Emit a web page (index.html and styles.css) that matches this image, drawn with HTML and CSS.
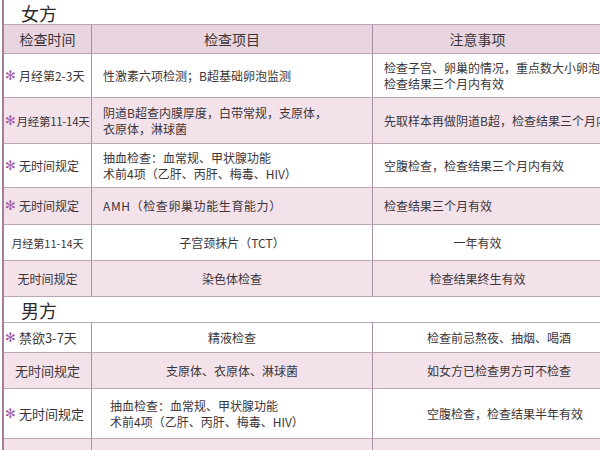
FILE: index.html
```html
<!DOCTYPE html>
<html lang="zh">
<head>
<meta charset="utf-8">
<title>孕前检查项目</title>
<link rel="stylesheet" href="styles.css">
</head>
<body>
<div class="sheet">
  <div class="title t1">女方</div>
  <div class="row head h29">
    <div class="c1 center">检查时间</div>
    <div class="c2 center">检查项目</div>
    <div class="c3 center">注意事项</div>
  </div>
  <div class="row h44">
    <div class="c1"><span class="star">✻</span>月经第2-3天</div>
    <div class="c2 pl">性激素六项检测；B超基础卵泡监测</div>
    <div class="c3 pl">检查子宫、卵巢的情况，重点数大小卵泡<br>检查结果三个月内有效</div>
  </div>
  <div class="row pink h46">
    <div class="c1 tight"><span class="star">✻</span>月经第11-14天</div>
    <div class="c2 pl">阴道B超查内膜厚度，白带常规，支原体，<br>衣原体，淋球菌</div>
    <div class="c3 pl">先取样本再做阴道B超，检查结果三个月内有效</div>
  </div>
  <div class="row h44">
    <div class="c1"><span class="star">✻</span>无时间规定</div>
    <div class="c2 pl">抽血检查：血常规、甲状腺功能<br>术前4项（乙肝、丙肝、梅毒、HIV）</div>
    <div class="c3 pl">空腹检查，检查结果三个月内有效</div>
  </div>
  <div class="row pink h37">
    <div class="c1"><span class="star">✻</span>无时间规定</div>
    <div class="c2 pl amh">AMH（检查卵巢功能生育能力）</div>
    <div class="c3 pl">检查结果三个月有效</div>
  </div>
  <div class="row h36">
    <div class="c1 center small">月经第11-14天</div>
    <div class="c2 center">子宫颈抹片（TCT）</div>
    <div class="c3 center">一年有效</div>
  </div>
  <div class="row pink h36">
    <div class="c1 center">无时间规定</div>
    <div class="c2 center">染色体检查</div>
    <div class="c3 center">检查结果终生有效</div>
  </div>
  <div class="row title t2">男方</div>
  <div class="row h30">
    <div class="c1 big"><span class="star">✻</span>禁欲3-7天</div>
    <div class="c2 center">精液检查</div>
    <div class="c3 pr">检查前忌熬夜、抽烟、喝酒</div>
  </div>
  <div class="row pink h36">
    <div class="c1 center big">无时间规定</div>
    <div class="c2 center">支原体、衣原体、淋球菌</div>
    <div class="c3 pr">如女方已检查男方可不检查</div>
  </div>
  <div class="row h50">
    <div class="c1 big"><span class="star">✻</span>无时间规定</div>
    <div class="c2 pl2">抽血检查：血常规、甲状腺功能<br>术前4项（乙肝、丙肝、梅毒、HIV）</div>
    <div class="c3 pr">空腹检查，检查结果半年有效</div>
  </div>
  <div class="row pink h40">
    <div class="c1"></div>
    <div class="c2"></div>
    <div class="c3"></div>
  </div>
</div>
</body>
</html>
```

FILE: styles.css
```css
html, body {
  margin: 0;
  padding: 0;
  background: #ffffff;
  overflow: hidden;
}

body {
  width: 600px;
  height: 450px;
  font-family: "Noto Sans CJK SC", "Noto Sans", sans-serif;
  color: #3b3539;
  font-size: 12px;
}

.sheet {
  margin-left: 2px;
  border-left: 2px solid #a27f9c;
  width: 700px;
}

.title {
  display: flex;
  align-items: center;
  padding-left: 17px;
  font-size: 18px;
  color: #2e2a2d;
  background: #ffffff;
}

.t1 {
  height: 24px;
  padding-top: 2px;
  box-sizing: border-box;
}

.t2 {
  height: 26px;
  border-top: 1px solid #bda6b8;
  box-sizing: border-box;
}

.row {
  display: flex;
  box-sizing: border-box;
  border-top: 1px solid #bda6b8;
  background: #ffffff;
}

.head {
  background: #e9d5e0;
  font-size: 14px;
}

.pink {
  background: #f3e2e9;
}

.h29 { height: 29px; }
.h30 { height: 30px; }
.h36 { height: 36px; }
.h37 { height: 37px; }
.h40 { height: 40px; }
.h44 { height: 44px; }
.h46 { height: 46px; }
.h50 { height: 50px; }

.c1, .c2, .c3 {
  display: flex;
  align-items: center;
  box-sizing: border-box;
  line-height: 16px;
}

.c1 {
  width: 88px;
  border-right: 1px solid #a88fa6;
  padding-left: 1px;
  white-space: nowrap;
}

.c2 {
  width: 281px;
  border-right: 1px solid #a88fa6;
}

.c3 {
  flex: 1;
}

.center {
  justify-content: center;
}

.c1.center {
  padding-left: 0;
}

.pl {
  padding-left: 11px;
}

.pl2 {
  padding-left: 18px;
}

.pr {
  padding-left: 54px;
}

.c3.center {
  padding-right: 130px;
  padding-left: 8px;
}

.star {
  color: #a05aa8;
  font-size: 13px;
  font-weight: bold;
  margin-right: 3px;
  font-family: "DejaVu Sans", sans-serif;
}

.tight {
  letter-spacing: -0.3px;
  font-size: 11.5px;
}

.tight .star {
  margin-right: 1px;
}

.small {
  font-size: 11px;
  padding-left: 6px;
}

.big {
  font-size: 13px;
}

.amh {
  letter-spacing: 0.6px;
}
```
